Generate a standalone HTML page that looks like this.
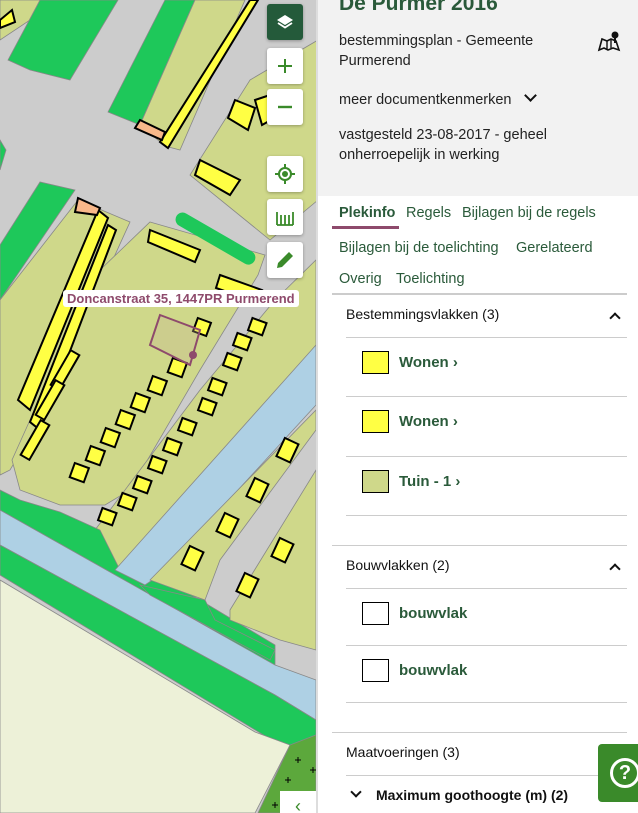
<!DOCTYPE html>
<html><head><meta charset="utf-8"><style>
*{box-sizing:border-box;margin:0;padding:0}
body{width:638px;height:813px;overflow:hidden;font-family:"Liberation Sans",sans-serif;background:#fff;position:relative}
#map{position:absolute;left:0;top:0;width:318px;height:813px;background:#cccccc;overflow:hidden}
.btn{position:absolute;left:267px;width:36px;height:36px;background:#fff;border-radius:3px;box-shadow:0 1px 3px rgba(0,0,0,.3);display:flex;align-items:center;justify-content:center}
#panel{position:absolute;left:316px;top:0;width:322px;height:813px;background:#fff;border-left:2px solid #ddd}
.hdr{background:#f2f2f2;height:196px;padding:0 0 0 21px;color:#222;font-size:14.5px;line-height:20px}
.title{font-size:21px;font-weight:bold;color:#2a5a3a;position:absolute;top:-6px;left:21px}
.tab{position:absolute;font-size:14.5px;color:#2a5a3a}
.sec{position:absolute;left:14px;width:295px;font-size:14px;color:#111}
.line{position:absolute;left:14px;width:295px;height:1px;background:#ccc}
.item{position:absolute;left:44px;font-size:15px;font-weight:bold;color:#2a5a3a;display:flex;align-items:center}
.sw{width:27px;height:23px;border:1px solid #000;margin-right:10px}
</style></head><body>
<div id="map">
<svg width="318" height="813" viewBox="0 0 318 813">
<g stroke="#888" stroke-width="0.8">
<polygon points="0,0 60,0 0,40" fill="#cfd88a"/>
<polygon points="40,0 118,0 70,80 30,70 8,60" fill="#1ec85a"/>
<polygon points="165,0 195,0 140,125 108,112" fill="#1ec85a"/>
<polygon points="195,0 245,0 180,150 165,146 140,125" fill="#cfd88a"/>
<polygon points="250,80 318,40 318,200 270,240 190,175" fill="#cfd88a"/>
<polygon points="0,140 6,150 0,170" fill="#1ec85a"/>
<polygon points="0,245 40,182 75,190 0,300" fill="#1ec85a"/>
<polygon points="78,200 130,222 40,420 10,470 0,475 0,300" fill="#cfd88a"/>
<polygon points="150,222 265,255 258,275 200,370 130,490 105,505 60,505 20,490 12,460 30,420 100,270" fill="#cfd88a"/>
<polygon points="95,530 200,390 275,300 316,260 316,345 230,450 140,560 120,570" fill="#cfd88a"/>
<polygon points="0,490 20,500 60,512 100,530 120,570 140,565 200,600 275,645 275,670 0,545" fill="#1ec85a"/>
<polygon points="0,510 275,665 316,680 316,720 275,695 0,545" fill="#aed0e4"/>
<polygon points="115,570 316,345 316,405 160,575 145,585" fill="#aed0e4"/>
<polygon points="150,580 316,410 316,430 220,560 205,600" fill="#cfd88a"/>
<polygon points="140,585 205,600 215,620 275,650 270,660 150,595" fill="#1ec85a"/>
<polygon points="230,610 316,470 316,650 280,640 230,620" fill="#cfd88a"/>
<polygon points="0,545 275,695 316,720 316,735 285,748 0,575" fill="#1ec85a"/>
<polygon points="0,580 255,732 290,745 255,813 0,813" fill="#edf1d8"/>
<polygon points="290,745 316,735 316,813 258,813" fill="#5ca83c"/>
</g>
<g stroke="#000" stroke-width="1" fill="none">
<path d="M295 760h6M298 757v6M310 770h6M313 767v6M285 780h6M288 777v6M300 795h6M303 792v6M272 805h6M275 802v6"/>
</g>
<rect x="180" y="210" width="90" height="14" rx="7" fill="#1ec85a" transform="rotate(30 180 210)"/>
<g fill="#ffff44" stroke="#000" stroke-width="2">
<polygon points="250,0 258,0 168,148 160,142"/>
<polygon points="98,210 108,218 30,410 18,400"/>
<polygon points="108,225 116,230 40,430 30,422"/>
<polygon points="0,20 12,10 15,22 0,28"/>
<polygon points="255,100 270,95 280,115 262,125"/>
<polygon points="235,100 255,108 248,130 228,118"/>
<polygon points="200,160 240,180 230,195 195,175"/>
<polygon points="150,230 200,250 195,262 148,242"/>
<polygon points="220,275 262,290 256,302 216,288"/>
</g>
<g fill="#ffff44" stroke="#000" stroke-width="2">
<rect x="195" y="320" width="14" height="14" transform="rotate(20 202 327)"/>
<rect x="170" y="360" width="15" height="15" transform="rotate(20 177 367)"/>
<rect x="150" y="378" width="15" height="15" transform="rotate(20 157 385)"/>
<rect x="133" y="395" width="15" height="15" transform="rotate(20 140 402)"/>
<rect x="118" y="412" width="15" height="15" transform="rotate(20 125 419)"/>
<rect x="103" y="430" width="15" height="15" transform="rotate(20 110 437)"/>
<rect x="88" y="448" width="15" height="15" transform="rotate(20 95 455)"/>
<rect x="72" y="465" width="15" height="15" transform="rotate(20 79 472)"/>
<rect x="60" y="350" width="10" height="40" transform="rotate(30 65 370)"/>
<rect x="45" y="380" width="10" height="40" transform="rotate(30 50 400)"/>
<rect x="30" y="420" width="10" height="40" transform="rotate(30 35 440)"/>
<rect x="250" y="320" width="15" height="13" transform="rotate(20 257 326)"/>
<rect x="235" y="335" width="15" height="13" transform="rotate(20 242 341)"/>
<rect x="225" y="355" width="15" height="13" transform="rotate(20 232 361)"/>
<rect x="210" y="380" width="15" height="13" transform="rotate(20 217 386)"/>
<rect x="200" y="400" width="15" height="13" transform="rotate(20 207 406)"/>
<rect x="180" y="420" width="15" height="13" transform="rotate(20 187 426)"/>
<rect x="165" y="440" width="15" height="13" transform="rotate(20 172 446)"/>
<rect x="150" y="458" width="15" height="13" transform="rotate(20 157 464)"/>
<rect x="135" y="478" width="15" height="13" transform="rotate(20 142 484)"/>
<rect x="120" y="495" width="15" height="13" transform="rotate(20 127 501)"/>
<rect x="100" y="510" width="15" height="13" transform="rotate(20 107 516)"/>
<rect x="280" y="440" width="15" height="20" transform="rotate(25 287 450)"/>
<rect x="250" y="480" width="15" height="20" transform="rotate(25 257 490)"/>
<rect x="220" y="515" width="15" height="20" transform="rotate(25 227 525)"/>
<rect x="275" y="540" width="15" height="20" transform="rotate(25 282 550)"/>
<rect x="240" y="575" width="15" height="20" transform="rotate(25 247 585)"/>
<rect x="185" y="548" width="15" height="20" transform="rotate(25 192 558)"/>
</g>
<polygon points="160,315 200,330 190,365 150,345" fill="rgba(200,180,150,.3)" stroke="#8e4a6c" stroke-width="2"/>
<circle cx="193" cy="355" r="4" fill="#8e4a6c"/>
<polygon points="140,120 165,132 162,140 135,128" fill="#f8b88a" stroke="#000" stroke-width="2"/>
<polygon points="78,198 100,208 97,215 75,212" fill="#f8b88a" stroke="#000" stroke-width="2"/>
</svg>
<div style="position:absolute;left:63px;top:290px;background:#fff;border-radius:3px;padding:1px 4px;font-size:13px;font-weight:bold;color:#8e4a6c;white-space:nowrap">Doncanstraat 35, 1447PR Purmerend</div>
<div class="btn" style="top:4px;background:#245a3a"><svg width="20" height="20" viewBox="0 0 20 20"><path d="M10 3 L18 8 L10 13 L2 8Z" fill="#fff"/><path d="M3 11 L10 15.5 L17 11" stroke="#fff" stroke-width="1.8" fill="none"/></svg></div>
<div class="btn" style="top:48px"><svg width="18" height="18"><path d="M9 2v14M2 9h14" stroke="#3a8a2a" stroke-width="2"/></svg></div>
<div class="btn" style="top:89px"><svg width="18" height="18"><path d="M2 9h14" stroke="#3a8a2a" stroke-width="2.4"/></svg></div>
<div class="btn" style="top:156px"><svg width="22" height="22"><circle cx="11" cy="11" r="6" stroke="#3a8a2a" stroke-width="2" fill="none"/><circle cx="11" cy="11" r="3" fill="#3a8a2a"/><path d="M11 1v4M11 17v4M1 11h4M17 11h4" stroke="#3a8a2a" stroke-width="2"/></svg></div>
<div class="btn" style="top:199px"><svg width="22" height="22"><path d="M3 6v13M7 9v10M11 9v10M15 9v10M19 6v13M3 19h16" stroke="#3a8a2a" stroke-width="1.8"/></svg></div>
<div class="btn" style="top:242px"><svg width="22" height="22"><path d="M3 19l1-5L15 3l4 4L8 18z" fill="#3a8a2a"/></svg></div>
<div style="position:absolute;left:280px;top:791px;width:36px;height:30px;background:#fff;color:#3a8a2a;font-size:18px;text-align:center;line-height:30px">‹</div>
</div>
<div id="panel">
<div class="hdr">
<div class="title">De Purmer 2016</div>
<div style="position:absolute;top:31px;left:21px;width:220px">bestemmingsplan - Gemeente Purmerend</div>
<svg style="position:absolute;left:279px;top:30px" width="24" height="22" viewBox="0 0 24 22"><path d="M2 20l3-11 5 2 4-2 5 2 3 9-6-2-5 2-4-2z" fill="none" stroke="#111" stroke-width="1.6"/><path d="M10 11v9M14 9v9" stroke="#111" stroke-width="1.4"/><circle cx="18" cy="5" r="3.5" fill="#111"/><path d="M18 8v5" stroke="#111" stroke-width="2"/></svg>
<div style="position:absolute;top:90px;left:21px">meer documentkenmerken <span style="display:inline-block;width:9px;height:9px;border-right:2px solid #111;border-bottom:2px solid #111;transform:rotate(45deg);margin:0 0 4px 10px"></span></div>
<div style="position:absolute;top:125px;left:21px;width:230px">vastgesteld 23-08-2017 - geheel onherroepelijk in werking</div>
</div>
<div class="tab" style="left:21px;top:205px;font-weight:bold">Plekinfo</div>
<div style="position:absolute;left:14px;top:226px;width:67px;height:3px;background:#8e4a6c"></div>
<div class="tab" style="left:88px;top:205px">Regels</div>
<div class="tab" style="left:144px;top:205px">Bijlagen bij de regels</div>
<div class="tab" style="left:21px;top:240px">Bijlagen bij de toelichting</div>
<div class="tab" style="left:198px;top:240px">Gerelateerd</div>
<div class="tab" style="left:21px;top:271px">Overig</div>
<div class="tab" style="left:78px;top:271px">Toelichting</div>
<div class="line" style="top:293px;height:2px;background:#ccc"></div>
<div class="sec" style="top:306px;left:28px">Bestemmingsvlakken (3)</div>
<div style="position:absolute;left:293px;top:314px;width:8px;height:8px;border-left:2px solid #111;border-top:2px solid #111;transform:rotate(45deg)"></div>
<div class="line" style="top:337px;left:28px;width:281px"></div>
<div class="item" style="top:351px"><div class="sw" style="background:#ffff44"></div>Wonen ›</div>
<div class="line" style="top:396px;left:28px;width:281px"></div>
<div class="item" style="top:410px"><div class="sw" style="background:#ffff44"></div>Wonen ›</div>
<div class="line" style="top:456px;left:28px;width:281px"></div>
<div class="item" style="top:470px"><div class="sw" style="background:#cfd88a"></div>Tuin - 1 ›</div>
<div class="line" style="top:515px;left:28px;width:281px"></div>
<div class="line" style="top:545px"></div>
<div class="sec" style="top:557px;left:28px">Bouwvlakken (2)</div>
<div style="position:absolute;left:293px;top:565px;width:8px;height:8px;border-left:2px solid #111;border-top:2px solid #111;transform:rotate(45deg)"></div>
<div class="line" style="top:588px;left:28px;width:281px"></div>
<div class="item" style="top:602px"><div class="sw" style="background:#fff"></div>bouwvlak</div>
<div class="line" style="top:645px;left:28px;width:281px"></div>
<div class="item" style="top:659px"><div class="sw" style="background:#fff"></div>bouwvlak</div>
<div class="line" style="top:702px;left:28px;width:281px"></div>
<div class="line" style="top:732px"></div>
<div class="sec" style="top:744px;left:28px">Maatvoeringen (3)</div>
<div class="line" style="top:775px;left:28px;width:281px"></div>
<div style="position:absolute;left:34px;top:788px;width:8px;height:8px;border-right:2px solid #111;border-bottom:2px solid #111;transform:rotate(45deg)"></div>
<div class="sec" style="top:787px;left:58px;font-weight:bold">Maximum goothoogte (m) (2)</div>
<div style="position:absolute;left:280px;top:744px;width:50px;height:58px;background:#3a8a2a;border-radius:4px 0 0 4px;display:flex;align-items:center;padding-left:12px"><div style="width:30px;height:30px;border:3px solid #fff;border-radius:50%;color:#fff;font-weight:bold;font-size:20px;text-align:center;line-height:24px">?</div></div>
</div>
</body></html>
